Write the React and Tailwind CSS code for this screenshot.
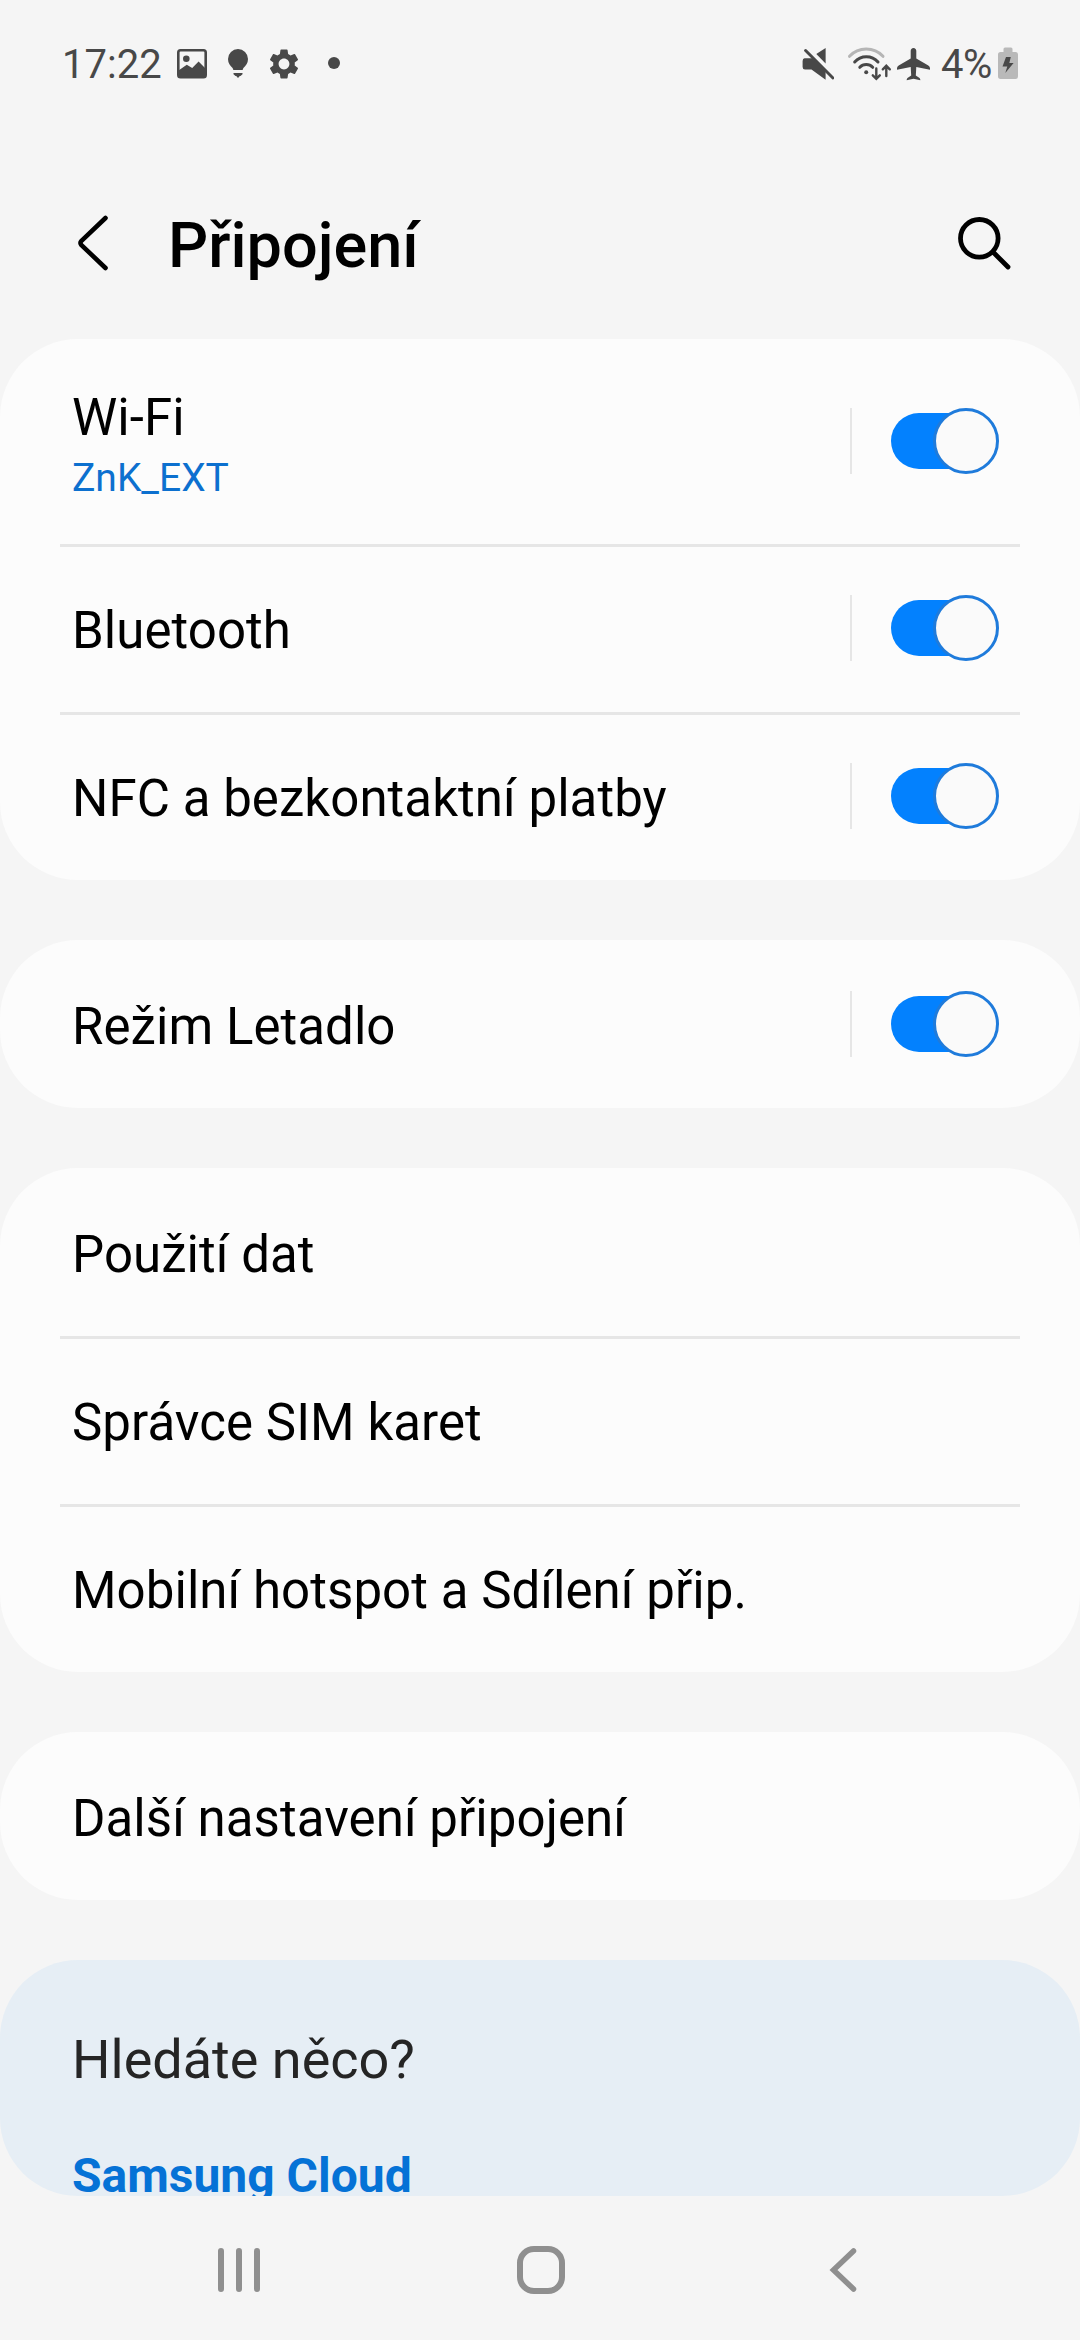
import React from "react";
import { MdSettings } from "react-icons/md";

function StatusBar() {
  return (
    <div className="flex h-[130px] items-center text-[#484848]">
      <span className="ml-[62px] w-[99px] whitespace-nowrap text-[40px] leading-[48px]">17:22</span>

      <svg className="ml-4 h-11 w-[30px]" viewBox="177 43 30 44" fill="none">
        <rect x="178.3" y="50.3" width="27.4" height="26.9" rx="2.2" stroke="currentColor" strokeWidth="2.6" />
        <circle cx="186.3" cy="58.8" r="3.3" fill="currentColor" />
        <path d="M178.5 70.5 L186.8 64.8 L192.2 68 L198.6 61.5 L205.5 68.5 V76.5 H178.5Z" fill="currentColor" />
      </svg>

      <svg className="ml-[21px] h-11 w-5" viewBox="228 43 20 44" fill="currentColor">
        <path d="M238 49 a10 10 0 0 1 10 10 c0 4.3-2.3 7-4.6 9 l-.8 2 h-9.2 l-.8-2 c-2.3-2-4.6-4.7-4.6-9 a10 10 0 0 1 10-10Z" />
        <path d="M233.5 73 h9 v1.3 l-2 1.8 h-.7 l-1.8 2 l-1.8-2 h-.7 l-2-1.8Z" />
      </svg>

      <MdSettings className="mb-[3px] ml-[18px] size-9" />

      <span className="mb-1 ml-[26px] size-3 rounded-full bg-[#484848]" />

      <svg className="ml-auto h-11 w-8" viewBox="802 43 32 44" fill="currentColor">
        <path d="M825.6 48 V63.5 L816.3 54Z" />
        <path d="M804.5 58.3 H812 L825.6 71.5 V79.8 L811.5 69.5 H805 Q802.7 69.5 802.6 67 V61 Q802.7 58.4 804.5 58.3Z" />
        <path d="M805.6 50.5 L833 78" fill="none" stroke="currentColor" strokeWidth="3" strokeLinecap="round" />
      </svg>

      <svg className="ml-[13px] h-11 w-[45px]" viewBox="847 43 45 44" fill="none" strokeWidth="3" strokeLinecap="round">
        <path d="M849.5 56.3 A23 23 0 0 1 883 56.3" stroke="#b5b5b5" />
        <path d="M854.7 62 A15.5 15.5 0 0 1 878 62" stroke="currentColor" />
        <path d="M859.8 67.3 A8.8 8.8 0 0 1 872.7 67.3" stroke="currentColor" />
        <circle cx="866.2" cy="72.3" r="2" fill="currentColor" />
        <path d="M876.3 68.5 V78.5 M872.8 75.3 L876.3 78.8 L879.8 75.3 M886.3 76 V66 M882.8 69.3 L886.3 65.8 L889.8 69.3" stroke="currentColor" strokeWidth="2.4" />
      </svg>

      <svg className="ml-[5px] h-11 w-[33px]" viewBox="897 43 33 44" fill="currentColor">
        <path d="M913.5 48 c1.8 0 2.8 1.4 2.8 3 V58.5 L928.3 65.5 Q930 66.6 930 68.3 V69.7 L916.3 67 L915.8 75.5 L919.5 78 Q920.5 79 920.3 80.2 L913.5 78.8 L906.7 80.2 Q906.5 79 907.5 78 L911.2 75.5 L910.7 67 L897 69.7 V68.3 Q897 66.6 898.7 65.5 L910.7 58.5 V51 c0-1.6 1-3 2.8-3Z" />
      </svg>

      <span className="ml-[11px] w-[57px] whitespace-nowrap text-[40px] leading-[48px] tracking-[-0.5px]">4%</span>

      <svg className="mr-[62px] h-11 w-5" viewBox="998 43 20 44">
        <path d="M1003.5 52 V49 Q1003.5 47.5 1005 47.5 H1011 Q1012.5 47.5 1012.5 49 V52 H1015.5 Q1018 52 1018 54.5 V76.3 Q1018 79 1015.5 79 H1000.5 Q998 79 998 76.3 V54.5 Q998 52 1000.5 52Z" fill="#b9b9b9" />
        <path d="M1006 57 H1010.8 L1009.3 63 H1013.6 L1005.3 73 L1007.3 66.5 H1002.5Z" fill="#484848" />
      </svg>
    </div>
  );
}

function Header() {
  return (
    <header className="flex h-[209px] items-start text-black">
      <svg className="ml-[76px] mt-[83px] h-[60px] w-9" viewBox="0 0 36 60" fill="none" stroke="currentColor" strokeWidth="4.6" strokeLinecap="round" strokeLinejoin="round">
        <path d="M29.5 5 L5.2 28.2 Q3.8 30 5.2 31.8 L29.5 55" />
      </svg>
      <h1 className="ml-[56px] mt-[76px] text-[63px] font-medium leading-[80px]">Připojení</h1>
      <svg className="ml-auto mr-[66px] mt-[83px] size-[60px]" viewBox="954 213 60 60" fill="none" stroke="currentColor" strokeWidth="4.8" strokeLinecap="round">
        <circle cx="979.3" cy="238.3" r="18.8" />
        <path d="M993 252 L1008 267" />
      </svg>
    </header>
  );
}

function Toggle() {
  return (
    <div className="flex items-center">
      <span className="h-[66px] w-[2px] bg-[#e6e6e6]" />
      <span className="ml-[39px] flex h-14 w-[75px] items-center rounded-l-full bg-[#0381fe]">
        <span className="ml-[42px] size-[66px] shrink-0 rounded-full border-[3px] border-[#1f7bdb] bg-[#fafafa]" />
      </span>
    </div>
  );
}

function Row({ label, sub, toggle, divider }) {
  return (
    <div className={sub ? "flex h-[205px] flex-col pb-[1px]" : "flex h-[168px] flex-col"}>
      <div className={divider ? "mx-[60px] h-[3px] shrink-0 bg-[#e6e6e6]" : "h-[3px] shrink-0"} />
      <div className="-mt-[3px] flex flex-1 items-center justify-between pl-[72px] pr-[114px]">
        <div className={sub ? "pt-[14px]" : "pt-[5px]"}>
          <div className="whitespace-nowrap text-[51px] leading-[60px] tracking-[0.06px] text-black">{label}</div>
          {sub && <div className="text-[39px] leading-[60px] text-[#0c70cf]">{sub}</div>}
        </div>
        {toggle && <Toggle />}
      </div>
    </div>
  );
}

function Card({ rows }) {
  return (
    <section className="rounded-[78px] bg-[#fcfcfc]">
      {rows.map((row, i) => (
        <Row key={row.label} divider={i > 0} {...row} />
      ))}
    </section>
  );
}

const groups = [
  [
    { label: "Wi-Fi", sub: "ZnK_EXT", toggle: true },
    { label: "Bluetooth", toggle: true },
    { label: "NFC a bezkontaktní platby", toggle: true },
  ],
  [{ label: "Režim Letadlo", toggle: true }],
  [{ label: "Použití dat" }, { label: "Správce SIM karet" }, { label: "Mobilní hotspot a Sdílení přip." }],
  [{ label: "Další nastavení připojení" }],
];

function NavBar() {
  return (
    <nav className="flex h-[144px] items-center pt-1 text-[#8f8f8f]">
      <svg className="ml-[215px] h-12 w-12" viewBox="0 0 48 48" stroke="currentColor" strokeWidth="6" strokeLinecap="round">
        <path d="M6 5 V43 M24 5 V43 M42 5 V43" />
      </svg>
      <span className="ml-[254px] size-12 rounded-[17px] border-[6px] border-[#8f8f8f]" />
      <svg className="ml-[262px] h-12 w-8" viewBox="0 0 32 48" fill="none" stroke="currentColor" strokeWidth="5.5" strokeLinecap="round">
        <path d="M26.5 5 L6.5 24 L26.5 43" />
      </svg>
    </nav>
  );
}

export default function App() {
  return (
    <div className="flex h-[2340px] w-[1080px] flex-col overflow-hidden bg-[#f5f5f5] font-['Roboto',sans-serif]">
      <StatusBar />
      <Header />
      <main className="flex flex-col gap-[60px]">
        {groups.map((rows) => (
          <Card key={rows[0].label} rows={rows} />
        ))}
        <section className="h-[236px] overflow-hidden rounded-[78px] bg-[#e6eef5] pl-[72px] pt-[68px]">
          <h2 className="text-[54px] leading-[64px] text-[#252525]">Hledáte něco?</h2>
          <div className="mt-[54px] whitespace-nowrap text-[48px] font-bold leading-[60px] text-[#0572d6]">Samsung Cloud</div>
        </section>
      </main>
      <NavBar />
    </div>
  );
}
